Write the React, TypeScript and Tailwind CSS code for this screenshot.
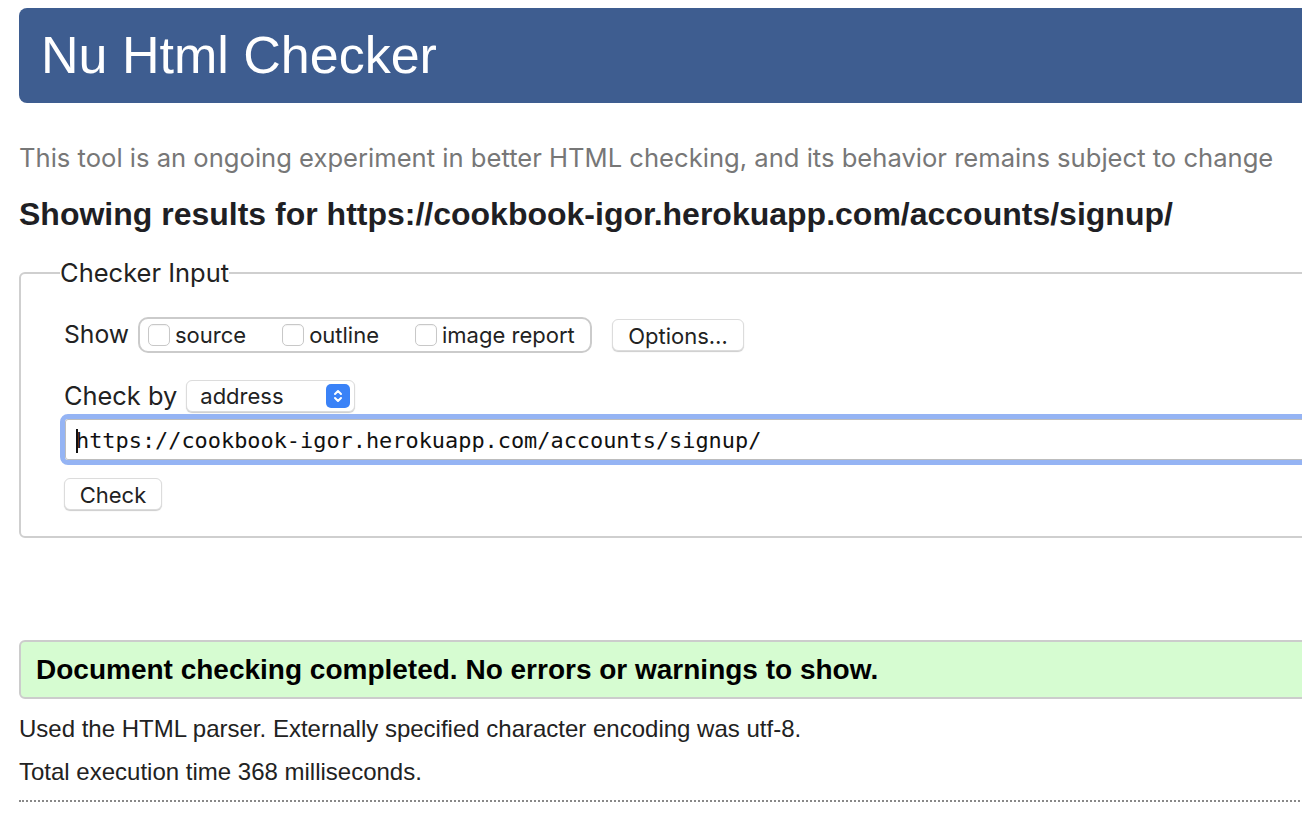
import React from "react";

const sf = { fontFamily: "Inter, 'Liberation Sans', sans-serif" };
const hv = { fontFamily: "'Liberation Sans', Arial, sans-serif" };
const mono = { fontFamily: "'DejaVu Sans Mono', 'Liberation Mono', monospace" };

const Box = ({ label }: { label: string }) => (
  <label className="flex items-center">
    <span className="w-[22px] h-[22px] rounded-[5px] border border-[#c8c8c8] bg-white shadow-[inset_0_1px_1px_rgba(0,0,0,0.05)]" />
    <span className="ml-[5px] text-[22px] text-[#222]">{label}</span>
  </label>
);

const Stepper = () => (
  <span className="w-[24px] h-[24px] rounded-[5px] bg-[#3a82f7] flex items-center justify-center">
    <svg width="12" height="16" viewBox="0 0 12 16" fill="none" stroke="white" strokeWidth="2" strokeLinecap="round" strokeLinejoin="round">
      <path d="M3 6l3-3 3 3" />
      <path d="M3 10l3 3 3-3" />
    </svg>
  </span>
);

export default function App() {
  return (
    <div className="w-full h-[818px] overflow-hidden bg-white">
      <div className="w-[1360px] pl-[19px] pt-[8px]">
        <header className="h-[95px] rounded-[8px] bg-[#3e5d90] pl-[22px] flex items-center">
          <h1 className="text-[52px] text-white leading-none pb-[2px]" style={hv}>Nu Html Checker</h1>
        </header>

        <p className="mt-[40px] text-[25.6px] leading-[30px] text-[#777] whitespace-nowrap" style={sf}>
          This tool is an ongoing experiment in better HTML checking, and its behavior remains subject to change
        </p>

        <h2 className="mt-[22px] text-[32px] leading-[38px] font-bold text-[#1f1f24] whitespace-nowrap" style={hv}>
          Showing results for https://cookbook-igor.herokuapp.com/accounts/signup/
        </h2>

        <fieldset className="mt-[25px] border-2 border-[#cfcfcf] rounded-[6px] pl-[43px] pt-[27px] pb-[26px]" style={sf}>
          <legend className="-ml-[4px] text-[25.5px] leading-[30px] text-[#222]">Checker Input</legend>

          <div className="flex items-center h-[40px]">
            <span className="text-[24.7px] text-[#222]">Show</span>
            <div className="ml-[9px] h-[36px] w-[454px] border-2 border-[#cbcbcb] rounded-[10px] flex items-center pl-[8px] gap-[36px]">
              <Box label="source" />
              <Box label="outline" />
              <Box label="image report" />
            </div>
            <button className="ml-[20px] h-[32px] w-[132px] rounded-[6px] bg-white border border-[#dcdcdc] shadow-[0_1px_1px_rgba(0,0,0,0.2)] text-[22px] text-[#222]">
              Options…
            </button>
          </div>

          <div className="mt-[24px] flex items-center h-[34px]">
            <span className="text-[25.4px] text-[#222]">Check by</span>
            <div className="ml-[9px] h-[32px] w-[169px] rounded-[6px] bg-white border border-[#dcdcdc] shadow-[0_1px_1px_rgba(0,0,0,0.2)] flex items-center justify-between pl-[13px] pr-[4px]">
              <span className="text-[22px] text-[#222]">address</span>
              <Stepper />
            </div>
          </div>

          <div className="mt-[1px] -ml-[4px] h-[51px] rounded-[8px] border-[5px] border-[#95b4f4] bg-white flex items-center">
            <div className="h-full w-full border border-[#bdbdbd] rounded-[3px] flex items-center pl-[10px] pt-[3px]">
              <span className="w-[2px] h-[24px] bg-[#111] -mr-[2px]" />
              <span className="text-[21.9px] text-[#111]" style={mono}>https://cookbook-igor.herokuapp.com/accounts/signup/</span>
            </div>
          </div>

          <button className="mt-[13px] h-[32px] w-[98px] rounded-[6px] bg-white border border-[#dcdcdc] shadow-[0_1px_1px_rgba(0,0,0,0.2)] text-[22px] text-[#222]">
            Check
          </button>
        </fieldset>

        <div className="mt-[102px] h-[59px] rounded-[6px] border-2 border-[#cccccc] bg-[#d6fcd1] flex items-center pl-[15px]">
          <p className="text-[28px] font-bold text-black whitespace-nowrap" style={hv}>Document checking completed. No errors or warnings to show.</p>
        </div>

        <p className="mt-[15px] text-[24px] leading-[30px] text-[#222]" style={hv}>
          Used the HTML parser. Externally specified character encoding was utf-8.
        </p>
        <p className="mt-[13px] text-[24px] leading-[30px] text-[#222]" style={hv}>
          Total execution time 368 milliseconds.
        </p>
        <div className="mt-[13px] border-t-2 border-dotted border-[#888]" />
      </div>
    </div>
  );
}
